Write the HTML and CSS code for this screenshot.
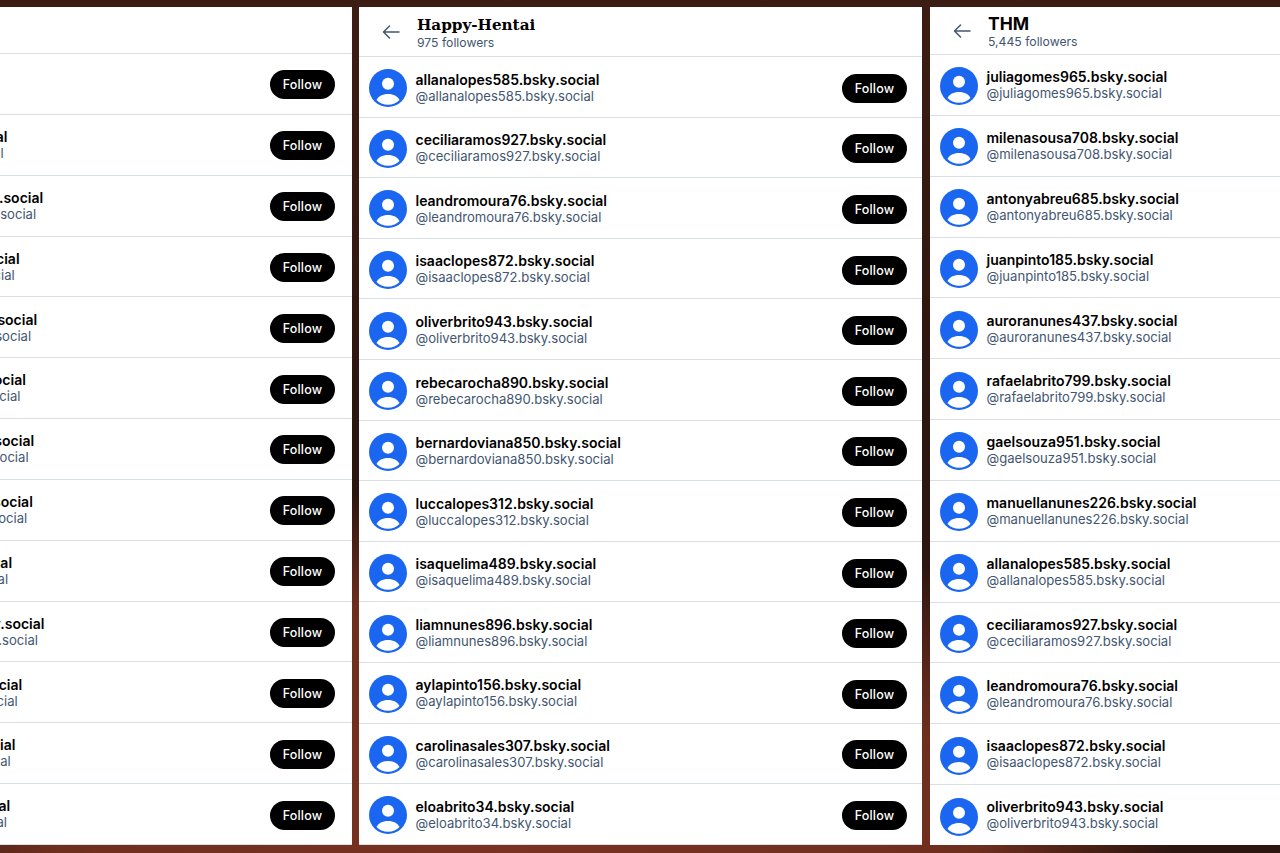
FILE: index.html
```html
<!DOCTYPE html>
<html lang="en">
<head>
    <meta charset="UTF-8">
    <title>Followers</title>
    <link rel="stylesheet" href="styles.css">
</head>
<body>
    <svg class="defs" width="0" height="0">
        <symbol id="avatar" viewBox="0 0 38 38">
            <circle cx="19" cy="19" r="19" fill="#1a66f0"/>
            <circle cx="19" cy="14.700" r="6" fill="#fff"/>
            <path d="M7.500 31c1.800-3.800 6-6 11.500-6s9.700 2.200 11.500 6c-2.800 3-6.900 4.800-11.500 4.800S10.300 34 7.500 31z" fill="#fff"/>
        </symbol>
        <symbol id="back" viewBox="0 0 18 14">
            <path d="M17 7H1.500M7.500 1 1.500 7l6 6" fill="none" stroke="#42566f" stroke-width="1.500" stroke-linecap="round" stroke-linejoin="round"/>
        </symbol>
    </svg>
    <div class="columns">
        <section class="panel panel-left">
            <header class="panel-head panel-head-left"></header>
            <div id="listLeft"></div>
        </section>
        <section class="panel panel-mid">
            <header class="panel-head">
                <svg class="back"><use href="#back"/></svg>
                <div>
                    <h2 class="title-serif">Happy-Hentai</h2>
                    <p class="count">975 followers</p>
                </div>
            </header>
            <div id="listMid"></div>
        </section>
        <section class="panel panel-right">
            <header class="panel-head panel-head-short">
                <svg class="back"><use href="#back"/></svg>
                <div>
                    <h2 class="title-sans">THM</h2>
                    <p class="count">5,445 followers</p>
                </div>
            </header>
            <div id="listRight"></div>
        </section>
    </div>
    <script src="list.js"></script>
</body>
</html>
```

FILE: styles.css
```css
* {
    box-sizing: border-box;
}
body {
    margin: 0;
    height: 853px;
    overflow: hidden;
    font-family: Inter, sans-serif;
    color: #000;
    background:
        radial-gradient(ellipse 660px 370px at 40% 100%, #7a3222 0%, #6e2e1e 70%, rgba(90, 40, 25, 0) 100%),
        linear-gradient(180deg, #3c1d13 0%, #2c1610 50%, #2e1610 100%);
}
.defs {
    position: absolute;
}
.columns {
    display: flex;
    padding-top: 7px;
    height: 845px;
}
.panel {
    background: #fff;
    flex: none;
    overflow: hidden;
}
.panel-left {
    width: 563px;
    margin-left: -211px;
}
.panel-mid {
    width: 563px;
    margin-left: 7px;
}
.panel-right {
    width: 563px;
    margin-left: 8px;
}
.panel-head {
    height: 50px;
    display: flex;
    align-items: center;
    padding-left: 23px;
    gap: 17px;
    border-bottom: 1px solid #d9dfe6;
}
.panel-head-short {
    height: 48px;
    padding-top: 1px;
}
.panel-head-left {
    height: 47px;
}
.back {
    width: 18px;
    height: 14px;
    flex: none;
}
.title-serif {
    margin: 0;
    padding-top: 2px;
    font-family: "DejaVu Serif", serif;
    font-size: 15.200px;
    line-height: 20px;
    font-weight: 700;
}
.title-sans {
    margin: 0;
    font-size: 17.500px;
    line-height: 20px;
    font-weight: 700;
}
.count {
    margin: 0;
    font-size: 12.200px;
    line-height: 15px;
    color: #42566f;
}
.row {
    height: 60.850px;
    display: flex;
    align-items: center;
    padding: 0 15px 0 10px;
    border-bottom: 1px solid #d9dfe6;
}
.panel-mid .row {
    height: 60.600px;
}
.panel-left .row {
    padding-right: 17px;
}
.avatar {
    width: 38px;
    height: 38px;
    flex: none;
    margin: 3px 8.500px 0 0;
}
.who {
    flex: 1;
    min-width: 0;
    padding-top: 2px;
}
.panel-right .who,
.panel-left .who {
    padding-top: 1px;
}
.name {
    font-size: 14px;
    line-height: 17px;
    font-weight: 600;
}
.handle {
    font-size: 13.100px;
    line-height: 17.500px;
    color: #42566f;
}
.follow {
    width: 65px;
    height: 29px;
    margin-top: 2px;
    border: none;
    border-radius: 15px;
    background: #000;
    color: #fff;
    font-family: inherit;
    font-size: 12.500px;
    font-weight: 500;
    letter-spacing: 0.2px;
}
.panel-mid .follow {
    margin-top: 3px;
}
```

FILE: list.js
```js
const midNames = ['allanalopes585', 'ceciliaramos927', 'leandromoura76', 'isaaclopes872', 'oliverbrito943', 'rebecarocha890', 'bernardoviana850', 'luccalopes312', 'isaquelima489', 'liamnunes896', 'aylapinto156', 'carolinasales307', 'eloabrito34'];
const rightNames = ['juliagomes965', 'milenasousa708', 'antonyabreu685', 'juanpinto185', 'auroranunes437', 'rafaelabrito799', 'gaelsouza951', 'manuellanunes226', 'allanalopes585', 'ceciliaramos927', 'leandromoura76', 'isaaclopes872', 'oliverbrito943'];
const leftNames = ['joaolima74', 'heitorlina32', 'valentinarosas94', 'miguelsilva73', 'beatrizsoares64', 'laviniarocha95', 'theodoroneves1', 'henriquecosta2', 'sophiaruiz31', 'marianacardoso5', 'lorenzolopes6', 'alicemartins1', 'enzoabreu11'];

function fillList(id, names, withButton) {
    const list = document.getElementById(id);
    names.forEach(name => {
        const div = document.createElement('div');
        div.className = 'row';
        div.innerHTML = `<svg class="avatar"><use href="#avatar"/></svg>
                         <div class="who">
                             <div class="name">${name}.bsky.social</div>
                             <div class="handle">@${name}.bsky.social</div>
                         </div>
                         ${withButton ? '<button class="follow">Follow</button>' : ''}`;
        list.appendChild(div);
    });
}

fillList('listLeft', leftNames, true);
fillList('listMid', midNames, true);
fillList('listRight', rightNames, false);
```
